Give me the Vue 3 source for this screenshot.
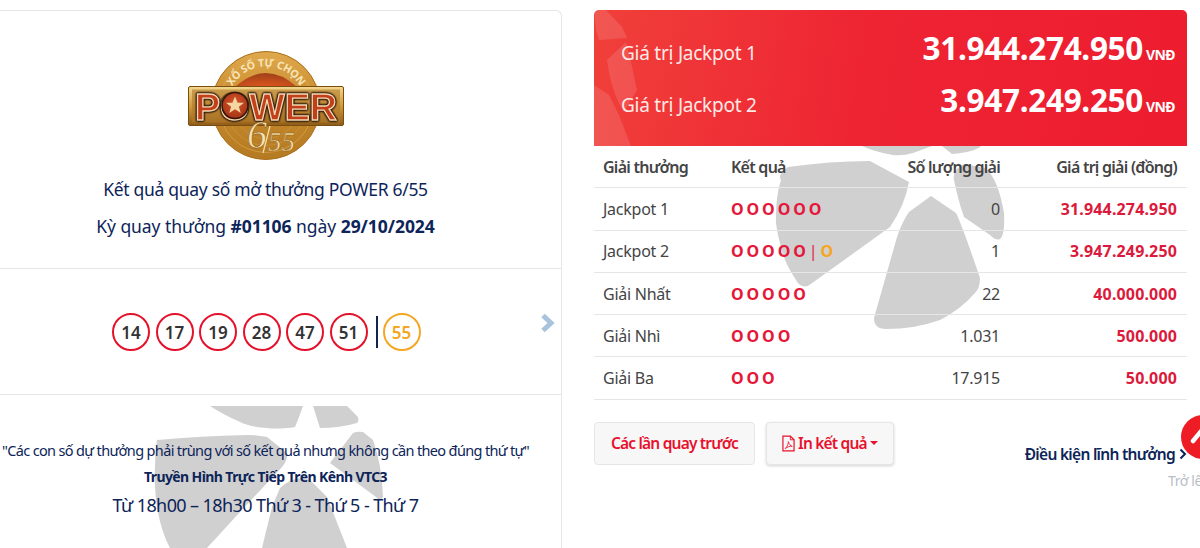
<script setup>
const balls = ['14', '17', '19', '28', '47', '51']
const rows = [
  { name: 'Jackpot 1', red: 6, gold: false, qty: '0', value: '31.944.274.950' },
  { name: 'Jackpot 2', red: 5, gold: true, qty: '1', value: '3.947.249.250' },
  { name: 'Giải Nhất', red: 5, gold: false, qty: '22', value: '40.000.000' },
  { name: 'Giải Nhì', red: 4, gold: false, qty: '1.031', value: '500.000' },
  { name: 'Giải Ba', red: 3, gold: false, qty: '17.915', value: '50.000' },
]
</script>

<template>
  <div class="page">
    <section class="card">
      <svg class="mark mark-left" viewBox="0 0 562 548" aria-hidden="true">
        <path d="M210 406H303L299 417L295 427Q291 428 287 428Q275 429 267 428Q250 427 240 422Q222 414 210 406Z" />
        <path d="M313 406H347L358 417Q359 421 357 423Q340 428 320 428Z" />
        <path d="M157 440Q200 436 247 435Q258 435 267 437L287 453Q288 460 282 467L240 512L207 548H170Q160 530 156 500Q153 470 157 440Z" />
        <path d="M330 463L353 433Q358 431 363 432L373 440Q382 465 383 497Q380 502 376 497Z" />
        <path d="M280 488Q295 474 310 480L327 497L347 548H262L272 507Z" />
      </svg>
      <div class="head">
        <svg class="logo" viewBox="0 0 156 110" role="img" aria-label="Power 6/55">
          <defs>
            <linearGradient id="gold" x1="0" y1="0" x2="0" y2="1">
              <stop offset="0" stop-color="#e0a94d" />
              <stop offset="0.45" stop-color="#c78a2d" />
              <stop offset="1" stop-color="#b57a22" />
            </linearGradient>
            <linearGradient id="bar" x1="0" y1="0" x2="0" y2="1">
              <stop offset="0" stop-color="#f2d88e" />
              <stop offset="0.5" stop-color="#cf9a3a" />
              <stop offset="1" stop-color="#8e5c18" />
            </linearGradient>
            <radialGradient id="dome" cx="0.5" cy="1" r="0.9">
              <stop offset="0" stop-color="#e0571d" />
              <stop offset="1" stop-color="#a3431a" />
            </radialGradient>
            <radialGradient id="ballfill" cx="0.5" cy="0.4" r="0.7">
              <stop offset="0" stop-color="#d8542a" />
              <stop offset="1" stop-color="#9c2f12" />
            </radialGradient>
            <path id="arc" d="M41 42.200A39 39 0 0 1 115 42.200" />
          </defs>
          <circle cx="78" cy="54.500" r="54" fill="url(#gold)" stroke="#a96f1c" />
          <circle cx="78" cy="54.500" r="47" fill="none" stroke="#e5b862" stroke-width="0.700" opacity="0.700" />
          <circle cx="78" cy="54.500" r="40" fill="none" stroke="#dca64a" stroke-width="0.600" opacity="0.600" />
          <circle cx="78" cy="54.500" r="33" fill="none" stroke="#dca64a" stroke-width="0.600" opacity="0.600" />
          <path d="M47 36Q78 8 109 36Z" fill="url(#dome)" />
          <text class="arc-text"><textPath href="#arc" startOffset="50%" text-anchor="middle" textLength="82">XỔ SỐ TỰ CHỌN</textPath></text>
          <rect x="0.500" y="35.500" width="155" height="39" rx="1.500" fill="url(#bar)" stroke="#7b4d12" />
          <rect x="4" y="38.500" width="148" height="33" fill="#b07a2a" opacity="0.600" />
          <text class="power" x="78" y="68.500" text-anchor="middle" textLength="142" lengthAdjust="spacingAndGlyphs">POWER</text>
          <circle cx="47" cy="54.500" r="13" fill="url(#ballfill)" stroke="#32170c" stroke-width="1.600" />
          <path d="M47 45.500L49.600 51.700H56L50.900 55.700L52.800 62L47 58.300L41.200 62L43.100 55.700L38 51.700H44.400Z" fill="#f4d6a2" />
          <text class="six" x="59" y="97">6</text>
          <path d="M82 75L75 102" stroke="#f3dca5" stroke-width="1.300" />
          <text class="five" x="80" y="100">55</text>
        </svg>
        <p class="title">Kết quả quay số mở thưởng POWER 6/55</p>
        <p class="draw">Kỳ quay thưởng <b>#01106</b> ngày <b>29/10/2024</b></p>
      </div>

      <div class="balls">
        <span v-for="n in balls" :key="n" class="ball">{{ n }}</span>
        <i class="sep"></i>
        <span class="ball gold">55</span>
        <svg class="next" viewBox="0 0 15 20" aria-hidden="true">
          <path d="M3 2.500L11 10L3 17.500" fill="none" stroke="#a9c3de" stroke-width="5" />
        </svg>
      </div>

      <div class="note">
        <p class="quote">"Các con số dự thưởng phải trùng với số kết quả nhưng không cần theo đúng thứ tự"</p>
        <p class="tv">Truyền Hình Trực Tiếp Trên Kênh VTC3</p>
        <p class="time">Từ 18h00 – 18h30 Thứ 3 - Thứ 5 - Thứ 7</p>
      </div>
    </section>

    <section class="side">
      <svg class="mark mark-right" viewBox="594 146 593 200" aria-hidden="true">
        <path d="M862 146H932L913 153Q903 156 893 155Q875 152 862 146Z" />
        <path d="M942 146H981Q975 152 952 154Z" />
        <path d="M781 180Q777 175 788 167Q830 161 870 161L909 182Q905 205 890 227L808 286Q800 288 796 280Q784 262 781 247Q775 225 776 217Q776 195 781 180Z" />
        <path d="M931 196L956 213Q962 225 980 278Q980 288 975 293Q960 310 940 320Q915 329 886 329Q874 329 874 318L897 237Q902 222 909 212Z" />
        <path d="M954 180Q952 170 964 164L985 168Q998 178 1004 213Q1005 235 1000 239Q996 241 990 235L964 217Q958 200 954 180Z" />
      </svg>
      <div class="jackpot">
        <svg class="tint" viewBox="595 10 60 136" preserveAspectRatio="none" aria-hidden="true">
          <path d="M595 10H607L623 27L628 38L600 40L597 30Z" />
          <path d="M608 60L627 42Q633 65 638 90L625 112Q612 92 608 60Z" />
          <path d="M595 85L610 95L620 115L632 146H595Z" />
        </svg>
        <div class="jp-row">
          <span class="jp-name">Giá trị Jackpot 1</span>
          <span class="jp-val">31.944.274.950<small>VNĐ</small></span>
        </div>
        <div class="jp-row">
          <span class="jp-name">Giá trị Jackpot 2</span>
          <span class="jp-val">3.947.249.250<small>VNĐ</small></span>
        </div>
      </div>

      <div class="table">
        <div class="row thead">
          <span>Giải thưởng</span>
          <span>Kết quả</span>
          <span class="num">Số lượng giải</span>
          <span class="num">Giá trị giải (đồng)</span>
        </div>
        <div v-for="r in rows" :key="r.name" class="row">
          <span>{{ r.name }}</span>
          <span class="os">
            <b v-for="i in r.red" :key="i">O</b>
            <template v-if="r.gold"><em class="pipe">|</em><b class="o-gold">O</b></template>
          </span>
          <span class="num">{{ r.qty }}</span>
          <span class="num money">{{ r.value }}</span>
        </div>
      </div>

      <div class="actions">
        <button class="btn first" type="button">Các lần quay trước</button>
        <button class="btn raised" type="button">
          <svg class="pdf" viewBox="0 0 14 18" aria-hidden="true">
            <path d="M1 1H9L13 5V17H1Z" fill="none" stroke="#e8112d" stroke-width="1.300" />
            <path d="M9 1V5H13" fill="none" stroke="#e8112d" stroke-width="1" />
            <path d="M3.500 14.500C6 12 7 8.500 6.800 7C8 10 9 11.500 11 12C8.500 11.800 6 12.500 3.500 14.500Z" fill="none" stroke="#e8112d" stroke-width="0.900" />
          </svg>
          In kết quả
          <i class="caret"></i>
        </button>
        <a class="terms">Điều kiện lĩnh thưởng<svg viewBox="0 0 8 12" aria-hidden="true"><path d="M1.500 1.500L6 6L1.500 10.500" fill="none" stroke="#0d2459" stroke-width="2" /></svg></a>
      </div>
      <span class="top-label">Trở lên</span>
    </section>

    <button class="to-top" type="button" aria-label="Trở lên">
      <svg viewBox="0 0 44 44" aria-hidden="true"><path d="M12 26L22 14L32 26" fill="none" stroke="#fff" stroke-width="4.500" stroke-linecap="round" stroke-linejoin="round" /></svg>
    </button>
  </div>
</template>

<style>
html, body { margin: 0; overflow: hidden; background: #fff; }
</style>

<style scoped>
.page {
  position: relative;
  display: flex;
  gap: 32px;
  width: 1200px;
  height: 548px;
  padding-top: 10px;
  box-sizing: border-box;
  overflow: hidden;
  font-family: "Noto Sans", "Open Sans", sans-serif;
  color: #333;
}
p { margin: 0; }
.mark { position: absolute; fill: #d0d0d0; pointer-events: none; }
.card {
  position: relative;
  flex: 0 0 562px;
  min-width: 0;
  box-sizing: border-box;
  border: 1px solid #e6e6e6;
  border-left: 0;
  border-bottom: 0;
  border-top-right-radius: 6px;
  color: #0d2459;
}
.mark-left { left: 0; top: -11px; width: 562px; height: 548px; }
.head {
  position: relative;
  height: 258px;
  box-sizing: border-box;
  padding: 40px 30px 0 0;
  border-bottom: 1px solid #e6e6e6;
  text-align: center;
}
.logo { display: block; width: 156px; height: 110px; margin: 0 0 16px 188px; overflow: visible; }
.arc-text { font: 700 10.500px "Noto Sans", sans-serif; fill: #f8e6b8; }
.power {
  font: 700 37px "Liberation Sans", sans-serif;
  fill: #c23f1c;
  stroke: #f3d9b0;
  stroke-width: 1.300px;
  filter: drop-shadow(0 0 1px #2a140a) drop-shadow(0 0 0.7px #2a140a) drop-shadow(0 0 0.5px #2a140a);
}
.six { font: italic 400 40px "Liberation Serif", serif; fill: #f6e2b0; stroke: #8f5c16; stroke-width: 0.6px; }
.five { font: italic 400 27px "Liberation Serif", serif; fill: #f6e2b0; stroke: #8f5c16; stroke-width: 0.5px; }
.title { font-size: 17.500px; line-height: 24px; letter-spacing: -0.3px; }
.draw { margin-top: 13px; font-size: 17.500px; line-height: 24px; letter-spacing: -0.05px; }
.balls {
  position: relative;
  display: flex;
  align-items: center;
  height: 126px;
  box-sizing: border-box;
  padding: 1px 0 0 112px;
  gap: 5.500px;
  border-bottom: 1px solid #e6e6e6;
}
.ball {
  display: flex;
  align-items: center;
  justify-content: center;
  width: 38px;
  height: 38px;
  box-sizing: border-box;
  border: 2px solid #e5112a;
  border-radius: 50%;
  font-size: 17px;
  font-weight: 600;
  color: #333;
  background: #fff;
}
.ball.gold { border-color: #f5a623; color: #f5a623; }
.sep { width: 2px; height: 32px; margin: 0 -1px 0 3px; background: #10264f; }
.next { position: absolute; left: 540px; top: 44px; width: 15px; height: 20px; }
.note { position: relative; padding: 44px 30px 0 0; text-align: center; }
.quote { font-size: 14.500px; line-height: 22px; letter-spacing: -0.65px; white-space: nowrap; }
.tv { margin-top: 6px; font-size: 14px; line-height: 20px; font-weight: 700; letter-spacing: -0.6px; }
.time { margin-top: 5px; font-size: 18px; line-height: 26px; letter-spacing: -0.6px; }

.side { position: relative; flex: 0 0 593px; }
.mark-right { left: 0; top: 136px; width: 593px; height: 200px; }
.jackpot {
  position: relative;
  display: flex;
  flex-direction: column;
  justify-content: center;
  gap: 15px;
  height: 136px;
  box-sizing: border-box;
  padding: 0 12px 16px 27px;
  border-radius: 5px 5px 0 0;
  background: linear-gradient(100deg, #f0403a 0%, #ee2433 45%, #ed1c2f 100%);
  color: #fff;
  overflow: hidden;
}
.tint { position: absolute; left: 0; top: 0; width: 60px; height: 136px; fill: rgba(255, 255, 255, 0.12); }
.jp-row { position: relative; display: flex; justify-content: space-between; align-items: baseline; height: 37px; }
.jp-name { font-size: 19px; letter-spacing: -0.25px; color: #ffe9e6; }
.jp-val { font-size: 31.500px; font-weight: 700; letter-spacing: -0.3px; }
.jp-val small { margin-left: 3px; font-size: 14px; font-weight: 700; letter-spacing: -0.6px; }
.table { position: relative; }
.row {
  display: grid;
  grid-template-columns: 128px 170px 99px 1fr;
  align-items: center;
  height: 42.300px;
  box-sizing: border-box;
  padding: 0 10px 0 9px;
  border-bottom: 1px solid #e6e6e6;
  font-size: 16px;
  letter-spacing: -0.25px;
  color: #444;
}
.thead { font-weight: 600; letter-spacing: -0.75px; }
.num { text-align: right; }
.os { display: flex; gap: 2.900px; align-items: center; color: #e5173a; font-weight: 700; font-size: 16px; letter-spacing: 0; }
.os b { font-weight: 700; }
.pipe { font-style: normal; font-weight: 400; }
.o-gold { color: #f5a623; }
.money { font-weight: 700; color: #db1a3c; letter-spacing: 0.15px; }
.actions { position: relative; display: flex; align-items: flex-start; gap: 11px; margin-top: 22px; }
.btn {
  display: flex;
  align-items: center;
  gap: 3px;
  height: 43px;
  padding: 0 15px;
  border: 1px solid #e6e6e6;
  border-radius: 4px;
  background: #f7f7f7;
  font: 600 15.500px "Noto Sans", sans-serif;
  letter-spacing: -0.8px;
  color: #e8112d;
}
.first { width: 161px; justify-content: center; padding: 0; }
.raised { box-shadow: 0 1px 3px rgba(0, 0, 0, 0.18); }
.pdf { width: 13px; height: 17px; }
.caret {
  width: 0;
  height: 0;
  border: 4px solid transparent;
  border-top-color: #e8112d;
  border-bottom: 0;
}
.terms {
  display: flex;
  align-items: center;
  gap: 4px;
  margin: 21px 0 0 auto;
  font-size: 15.500px;
  font-weight: 600;
  letter-spacing: -0.7px;
  color: #0d2459;
  white-space: nowrap;
}
.terms svg { width: 8px; height: 12px; }
.top-label { position: absolute; left: 574px; top: 461px; font-size: 14px; letter-spacing: -0.4px; color: #b9bec6; white-space: nowrap; }
.to-top {
  position: absolute;
  left: 1181px;
  top: 415px;
  width: 44px;
  height: 44px;
  padding: 0;
  border: 0;
  border-radius: 50%;
  background: #ee1c25;
}
.to-top svg { display: block; width: 44px; height: 44px; }
</style>
